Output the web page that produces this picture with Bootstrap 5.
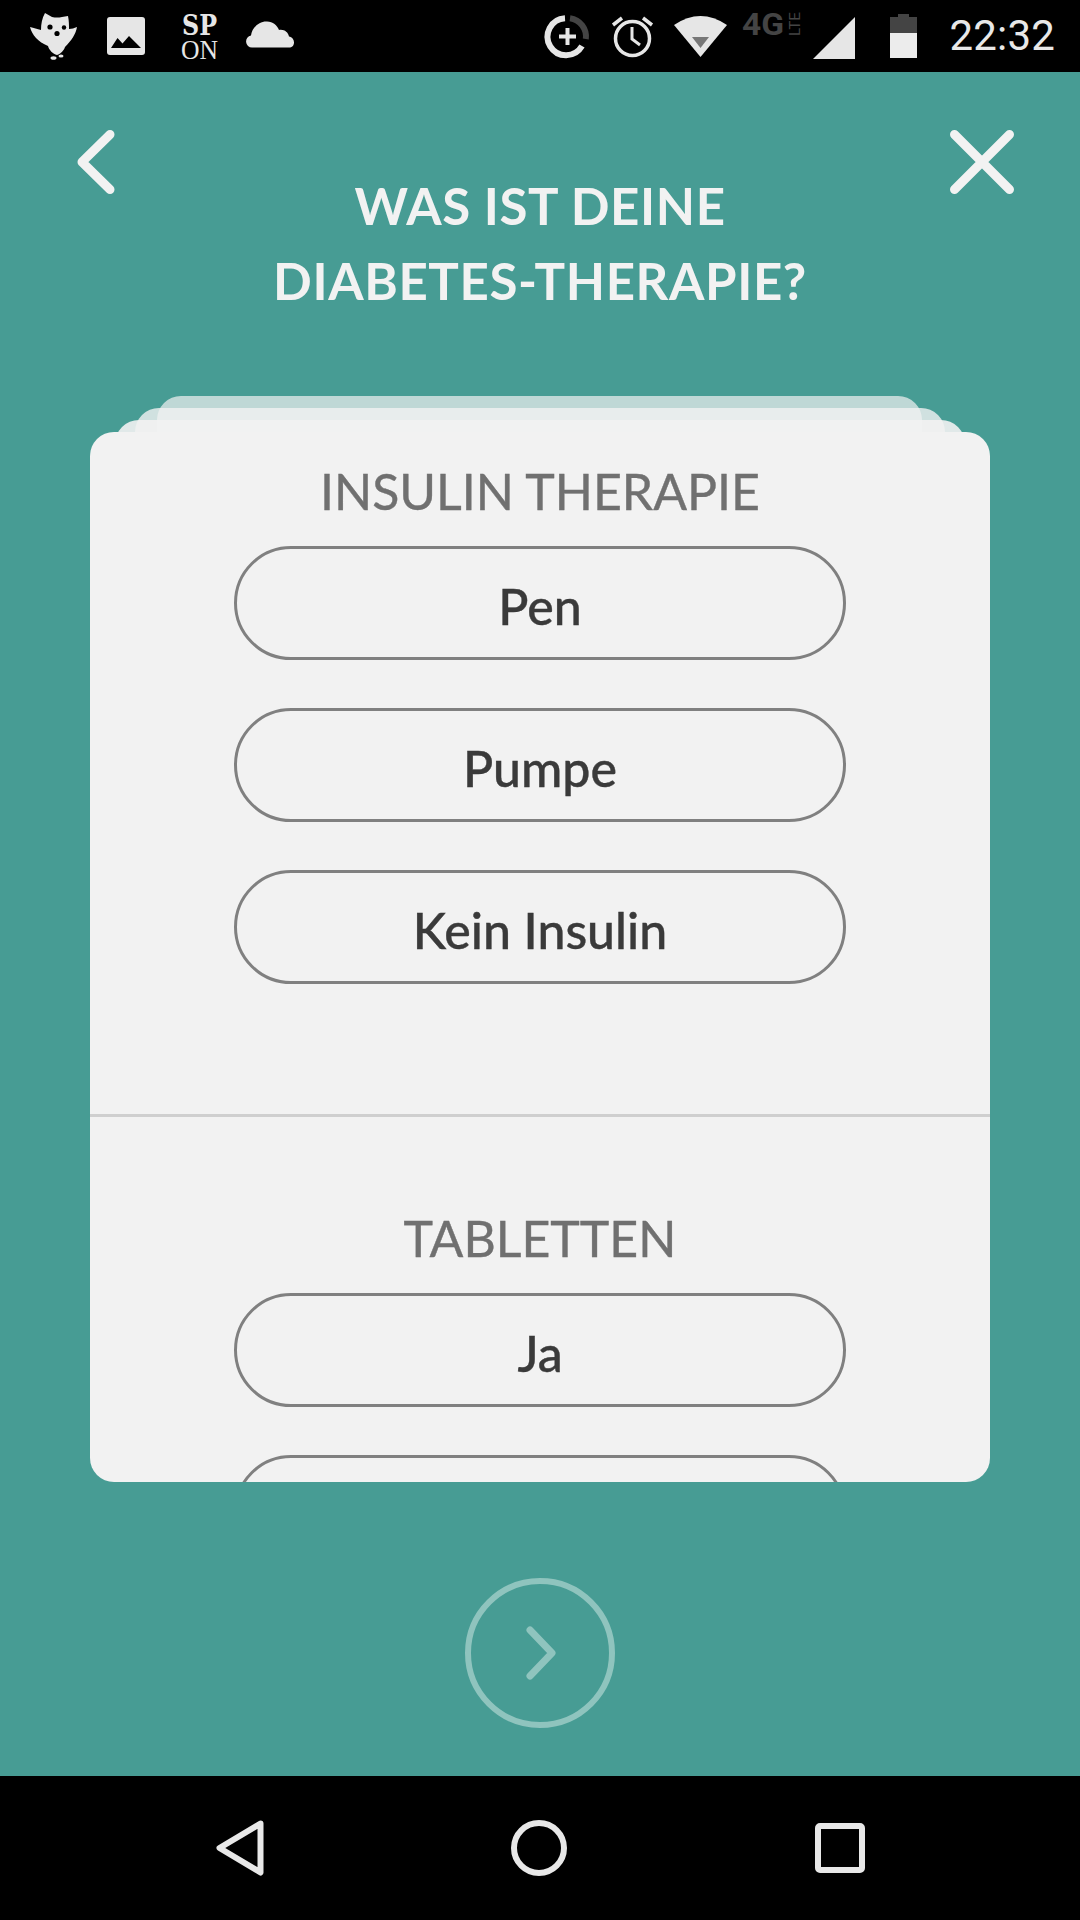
<!doctype html>
<html lang="de"><head><meta charset="utf-8"><title>Diabetes-Therapie</title>
<link rel="stylesheet" href="https://cdn.jsdelivr.net/npm/bootstrap@5.3.0/dist/css/bootstrap.min.css">
<style>
html,body{margin:0;background:#000}
.screen{width:1080px;height:1920px;background:#479c94;font-family:Lato,"Noto Sans",sans-serif}
.statusbar{height:72px;background:#000;color:#e6e6e6;flex:none}
.statusbar svg{display:block;flex:none;overflow:visible}
.navbar-bottom{height:144px;background:#000;flex:none;padding-top:44px}
.pagebody{min-height:0}
.headrow{padding:58px 66px 0;height:324px}
.headrow svg{flex:none}
.pagetitle{font-family:Lato,sans-serif;font-weight:700;font-size:51px;line-height:75px;color:#f2f2f2;margin:38px 0 0;letter-spacing:.6px}
.cardstack{position:relative;height:1086px;margin:0 90px}
.sheet{position:absolute;height:120px;border-radius:24px 24px 0 0;background:#f2f2f2}
.sheet-3{top:0;left:67px;right:68px;opacity:.7}
.sheet-2{top:12px;left:45px;right:45px;opacity:.8}
.sheet-1{top:24px;left:25px;right:25px;opacity:.9}
.sheetmain{position:absolute;top:36px;left:0;right:0;height:1050px;background:#f2f2f2;border-radius:24px;overflow:hidden;border:0}
.blockone{height:685px;flex:none;padding-top:29px;border-bottom:3px solid #cfcfcf}
.blocktwo{padding-top:91px}
.grouphead{font-weight:400;font-size:50px;line-height:60px;color:#707070;margin:0 0 25px;-webkit-text-stroke:.4px #707070}
.pillstack{width:612px;gap:48px}
.pillbtn{height:114px;flex:none;border:3px solid #808080;border-radius:57px;background:transparent;color:#3a3a3a;font-weight:500;font-size:50px;line-height:60px;padding:5px 0 0;width:100%;-webkit-text-stroke:.4px #3a3a3a}
.footrow{height:294px}
.nextcircle{display:block;margin-top:96px}
.i-owl{margin-left:30px;margin-top:13px}
.i-img{margin-left:30px;margin-top:17px}
.i-sp{margin-left:35px;margin-top:11px}
.i-cloud{margin-left:27px;margin-top:21px}
.i-saver{margin-left:auto;margin-top:15px}
.i-alarm{margin-left:23px;margin-top:15px}
.i-wifi{margin-left:21px;margin-top:14px}
.i-4g{margin-left:15px;margin-top:10px}
.i-signal{margin-left:11px;margin-top:17px}
.i-batt{margin-left:35px;margin-top:14px}
.clock{margin-left:32px;margin-right:25px;font-family:Roboto,sans-serif;font-size:42px;line-height:72px;color:#e8e8e8;letter-spacing:.2px}
.navback{margin-right:247px;margin-left:-4px}
.navhome{margin-right:248px}
.navrecent{margin-top:3px;margin-right:-4px}
</style></head>
<body>
<div class="screen d-flex flex-column">
  <div class="statusbar d-flex align-items-start">
    <svg class="i-owl" width="47" height="47" viewBox="0 0 47 47"><path d="M15 0l7 4q5 1 10 0l6-1c1 5 1 9 1 13 3 0 5-1 8-2-1 7-6 14-12 20-1 3-4 7-8 8-4-1-8-5-9-9C8 29 2 22 0 14c4 1 7 2 11 3 0-6 1-12 4-17z" fill="#e6e6e6"/><circle cx="20" cy="14" r="2.600" fill="#000"/><circle cx="34" cy="14.500" r="2.200" fill="#000"/><circle cx="27" cy="20.500" r="2.600" fill="#000"/><ellipse cx="23.500" cy="45" rx="3" ry="1.800" fill="#e6e6e6"/><ellipse cx="31" cy="43" rx="2.500" ry="1.500" fill="#e6e6e6"/></svg>
    <svg class="i-img" width="38" height="38" viewBox="0 0 38 38"><rect width="38" height="38" rx="3" fill="#e6e6e6"/><path d="M4 31l6.500-10 5 5.500 6.500-7.500 12 12z" fill="#000"/></svg>
    <svg class="i-sp" width="39" height="50" viewBox="0 0 39 50"><text x="2" y="24" font-family="DejaVu Serif,serif" font-weight="700" font-size="27" textLength="35" lengthAdjust="spacingAndGlyphs" fill="#e6e6e6">SP</text><text x="1" y="48" font-family="Liberation Serif,serif" font-size="27" textLength="37" lengthAdjust="spacingAndGlyphs" fill="#e6e6e6">ON</text></svg>
    <svg class="i-cloud" width="48" height="27" viewBox="0 0 48 27"><path d="M6 26.500A6 6 0 0 1 5 14.600C6 6 14 0 21 .5c6 0 10 4 12 8.500 5-1 9 2 10 6.500 3 .5 5 3 5 6s-2 5-5 5z" fill="#e6e6e6"/></svg>
    <svg class="i-saver" width="43" height="43" viewBox="0 0 43 43"><path d="M24 3.200A18.500 18.500 0 0 1 39.800 24" fill="none" stroke="#444" stroke-width="6"/><path d="M36 31A18.500 18.500 0 1 1 19 3.200" fill="none" stroke="#e6e6e6" stroke-width="6"/><path d="M21.500 13v17M13 21.500h17" stroke="#e6e6e6" stroke-width="4"/></svg>
    <svg class="i-alarm" width="41" height="42" viewBox="0 0 41 42"><circle cx="20.500" cy="23.500" r="17" fill="none" stroke="#e6e6e6" stroke-width="3.500"/><path d="M20 12v12l8 6" fill="none" stroke="#e6e6e6" stroke-width="3"/><path d="M1 10l9-7M40 10l-9-7" stroke="#e6e6e6" stroke-width="3.500"/></svg>
    <svg class="i-wifi" width="53" height="43" viewBox="0 0 53 43"><path d="M0 11Q26.500-7 53 11L26.500 43z" fill="#e6e6e6"/><path d="M18 23h17l-8.500 11z" fill="#777"/></svg>
    <svg class="i-4g" width="60" height="28" viewBox="0 0 60 28"><text x="0" y="25" font-family="Roboto,sans-serif" font-weight="700" font-size="32" textLength="42" lengthAdjust="spacingAndGlyphs" fill="#444">4G</text><text transform="translate(58 26) rotate(-90)" font-family="Roboto,sans-serif" font-size="14" textLength="24" lengthAdjust="spacingAndGlyphs" fill="#444">LTE</text></svg>
    <svg class="i-signal" width="42" height="42" viewBox="0 0 42 42"><path d="M42 0v42H0z" fill="#e6e6e6"/></svg>
    <svg class="i-batt" width="27" height="44" viewBox="0 0 27 44"><path d="M8 0h11v3h8v16H0V3h8z" fill="#444"/><rect y="19" width="27" height="25" fill="#ececec"/></svg>
    <span class="clock">22:32</span>
  </div>
  <main class="pagebody flex-grow-1 d-flex flex-column">
    <div class="headrow d-flex align-items-start">
      <svg width="64" height="64" viewBox="0 0 64 64" role="img" aria-label="Zurück"><path d="M44 4.500L16 32l28 27.500" fill="none" stroke="#f2f2f2" stroke-width="9" stroke-linecap="round" stroke-linejoin="round"/></svg>
      <h1 class="pagetitle flex-grow-1 text-center">WAS IST DEINE<br>DIABETES-THERAPIE?</h1>
      <svg width="64" height="64" viewBox="0 0 64 64" role="img" aria-label="Schließen"><path d="M4.500 4.500l55 55M59.500 4.500l-55 55" fill="none" stroke="#f2f2f2" stroke-width="9" stroke-linecap="round"/></svg>
    </div>
    <div class="cardstack">
      <div class="sheet sheet-3"></div>
      <div class="sheet sheet-2"></div>
      <div class="sheet sheet-1"></div>
      <div class="sheetmain card">
        <section class="blockone text-center d-flex flex-column align-items-center">
          <h2 class="grouphead">INSULIN THERAPIE</h2>
          <div class="pillstack d-flex flex-column">
            <button class="btn pillbtn" type="button">Pen</button>
            <button class="btn pillbtn" type="button">Pumpe</button>
            <button class="btn pillbtn" type="button">Kein Insulin</button>
          </div>
        </section>
        <section class="blocktwo text-center d-flex flex-column align-items-center">
          <h2 class="grouphead">TABLETTEN</h2>
          <div class="pillstack d-flex flex-column">
            <button class="btn pillbtn" type="button">Ja</button>
            <button class="btn pillbtn" type="button" aria-label="Weitere Option"></button>
          </div>
        </section>
      </div>
    </div>
    <div class="footrow d-flex justify-content-center">
      <svg class="nextcircle" width="150" height="150" viewBox="0 0 150 150" role="img" aria-label="Weiter"><circle cx="75" cy="75" r="72" fill="none" stroke="#8fc4be" stroke-width="6"/><path d="M65 52l22 23-22 23" fill="none" stroke="#8fc4be" stroke-width="7" stroke-linecap="round" stroke-linejoin="round"/></svg>
    </div>
  </main>
  <nav class="navbar-bottom d-flex justify-content-center align-items-start">
    <div class="d-flex w-100 justify-content-center">
      <svg class="navback" width="48" height="56" viewBox="0 0 48 56"><path d="M44.500 3.500L3.500 28l41 24.500z" fill="none" stroke="#e8e8e8" stroke-width="6" stroke-linejoin="round"/></svg>
      <svg class="navhome" width="56" height="56" viewBox="0 0 56 56"><circle cx="28" cy="28" r="25" fill="none" stroke="#e8e8e8" stroke-width="6"/></svg>
      <svg class="navrecent" width="50" height="50" viewBox="0 0 50 50"><rect x="3" y="3" width="44" height="44" rx="2" fill="none" stroke="#e8e8e8" stroke-width="6"/></svg>
    </div>
  </nav>
</div>
<script src="https://cdn.jsdelivr.net/npm/bootstrap@5.3.0/dist/js/bootstrap.bundle.min.js"></script>
</body></html>
